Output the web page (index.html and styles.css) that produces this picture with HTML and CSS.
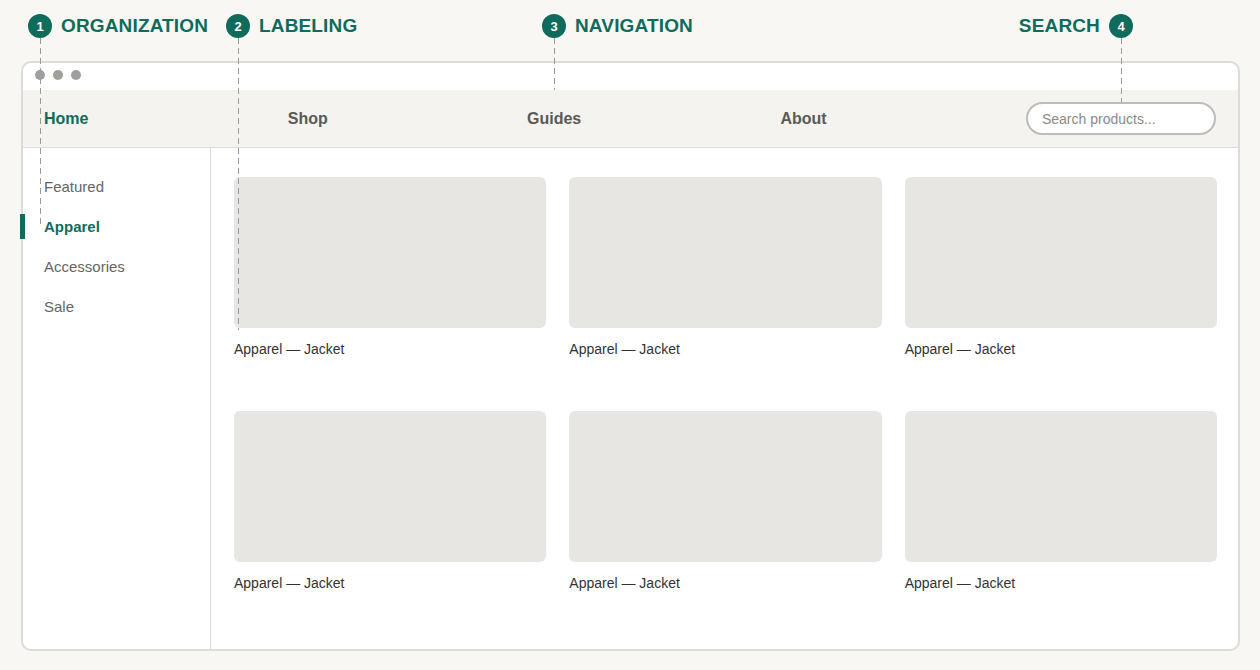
FILE: index.html
```html
<!DOCTYPE html>
<html>
<head>
<meta charset="utf-8">
<link rel="stylesheet" href="styles.css">
</head>
<body>
<div class="page">
  <div class="window">
    <div class="titlebar">
      <span class="dot"></span><span class="dot"></span><span class="dot"></span>
    </div>
    <nav class="nav">
      <a class="nav-item active">Home</a>
      <a class="nav-item">Shop</a>
      <a class="nav-item">Guides</a>
      <a class="nav-item">About</a>
      <div class="search">Search products...</div>
    </nav>
    <div class="main">
      <aside class="sidebar">
        <div class="side-item">Featured</div>
        <div class="side-item active">Apparel</div>
        <div class="side-item">Accessories</div>
        <div class="side-item">Sale</div>
      </aside>
      <section class="content">
        <div class="grid">
          <div class="card"><div class="thumb"></div><div class="label">Apparel — Jacket</div></div>
          <div class="card"><div class="thumb"></div><div class="label">Apparel — Jacket</div></div>
          <div class="card"><div class="thumb"></div><div class="label">Apparel — Jacket</div></div>
          <div class="card"><div class="thumb"></div><div class="label">Apparel — Jacket</div></div>
          <div class="card"><div class="thumb"></div><div class="label">Apparel — Jacket</div></div>
          <div class="card"><div class="thumb"></div><div class="label">Apparel — Jacket</div></div>
        </div>
      </section>
    </div>
  </div>

  <div class="anno anno-1"><span class="num">1</span><span class="anno-text">ORGANIZATION</span></div>
  <div class="anno anno-2"><span class="num">2</span><span class="anno-text">LABELING</span></div>
  <div class="anno anno-3"><span class="num">3</span><span class="anno-text">NAVIGATION</span></div>
  <div class="anno anno-4"><span class="anno-text">SEARCH</span><span class="num">4</span></div>

  <div class="leader leader-1"></div>
  <div class="leader leader-2"></div>
  <div class="leader leader-3"></div>
  <div class="leader leader-4"></div>
</div>
</body>
</html>
```

FILE: styles.css
```css
* { box-sizing: border-box; }

html, body {
  margin: 0;
  padding: 0;
  background: #f8f7f3;
  font-family: "Liberation Sans", Arial, sans-serif;
}

.page {
  position: relative;
  width: 1260px;
  height: 670px;
  padding: 61px 20px 0 21px;
}

.window {
  height: 590px;
  background: #ffffff;
  border: 2px solid #dcdbd7;
  border-radius: 10px;
  display: flex;
  flex-direction: column;
  overflow: visible;
}

.titlebar {
  height: 27px;
  display: flex;
  align-items: flex-start;
  gap: 8px;
  padding: 7px 0 0 12px;
}

.dot {
  width: 10px;
  height: 10px;
  border-radius: 50%;
  background: #a09f9b;
}

.nav {
  height: 58px;
  background: #f4f3ef;
  border-bottom: 1px solid #dddcd8;
  display: flex;
  align-items: center;
  justify-content: space-between;
  padding: 0 22px 0 21px;
}

.nav-item {
  font-size: 16px;
  font-weight: bold;
  color: #5a5a58;
}

.nav-item.active {
  color: #0f6b5b;
}

.search {
  width: 190px;
  height: 33px;
  border: 2px solid #bdbcb8;
  border-radius: 17px;
  background: #ffffff;
  padding: 0 0 0 14px;
  font-size: 14px;
  color: #8a8a88;
  display: flex;
  align-items: center;
}

.main {
  flex: 1;
  display: flex;
}

.sidebar {
  width: 188px;
  border-right: 1px solid #dddcd8;
  padding-top: 19px;
  position: relative;
}

.side-item {
  position: relative;
  height: 40px;
  line-height: 40px;
  padding-left: 21px;
  font-size: 15px;
  color: #666664;
}

.side-item.active {
  font-weight: bold;
  color: #0f6b5b;
}

.side-item.active::before {
  content: "";
  position: absolute;
  left: -3px;
  top: 7px;
  width: 5px;
  height: 25px;
  background: #0f6b5b;
}

.content {
  flex: 1;
  padding: 29px 21px 0 23px;
}

.grid {
  display: grid;
  grid-template-columns: repeat(3, 1fr);
  column-gap: 23px;
  row-gap: 54px;
}

.thumb {
  height: 151px;
  background: #e7e6e2;
  border-radius: 6px;
}

.label {
  margin-top: 13px;
  font-size: 14px;
  line-height: 16px;
  color: #333333;
}

/* annotations */
.anno {
  position: absolute;
  top: 14px;
  display: flex;
  align-items: center;
  gap: 9px;
  z-index: 3;
}

.anno-1 { left: 28px; }
.anno-2 { left: 226px; }
.anno-3 { left: 542px; }
.anno-4 { right: 127px; }

.num {
  width: 24px;
  height: 24px;
  border-radius: 50%;
  background: #0f6b5b;
  color: #ffffff;
  font-size: 13px;
  font-weight: bold;
  display: flex;
  align-items: center;
  justify-content: center;
}

.anno-text {
  font-size: 19px;
  font-weight: bold;
  color: #0f6b5b;
  letter-spacing: 0.15px;
  line-height: 24px;
}

.leader {
  position: absolute;
  top: 38px;
  width: 1px;
  background: repeating-linear-gradient(to bottom, #9a9a98 0 6px, transparent 6px 10px);
  z-index: 2;
}

.leader-1 { left: 40px; height: 188px; }
.leader-2 { left: 238px; height: 292px; }
.leader-3 { left: 554px; height: 52px; }
.leader-4 { left: 1121px; height: 64px; }
```
